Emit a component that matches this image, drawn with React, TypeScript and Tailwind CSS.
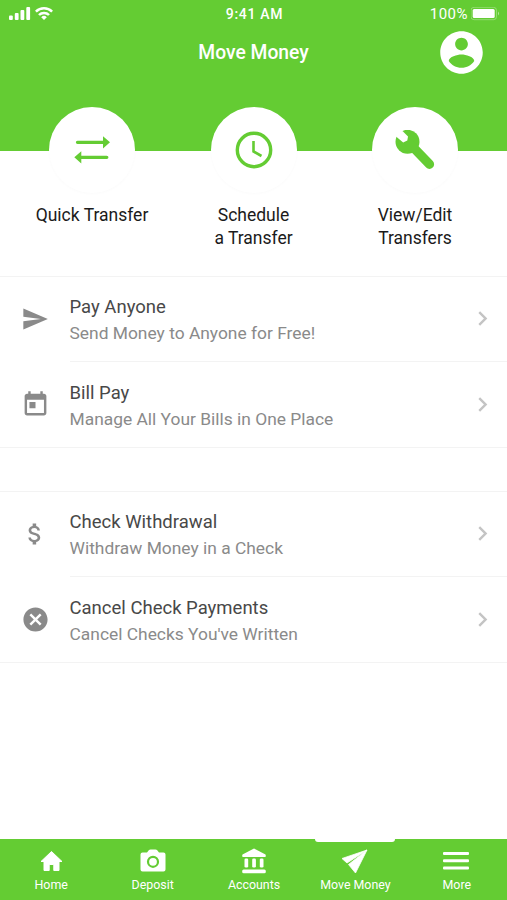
import type { ReactNode } from "react";

type IconProps = { size: number; path: string; className?: string };

const paths = {
  account:
    "M12 2C6.48 2 2 6.48 2 12s4.48 10 10 10 10-4.48 10-10S17.52 2 12 2zm0 3c1.66 0 3 1.34 3 3s-1.34 3-3 3-3-1.34-3-3 1.34-3 3-3zm0 14.2c-2.5 0-4.71-1.28-6-3.22.03-1.99 4-3.08 6-3.08 1.99 0 5.97 1.09 6 3.08-1.29 1.94-3.5 3.22-6 3.22z",
  send: "M2.01 21L23 12 2.01 3 2 10l15 2-15 2z",
  calendar:
    "M19 3h-1V1h-2v2H8V1H6v2H5c-1.11 0-1.99.9-1.99 2L3 19c0 1.1.89 2 2 2h14c1.1 0 2-.9 2-2V5c0-1.1-.9-2-2-2zm0 16H5V8h14v11zM7 10h5v5H7z",
  dollar:
    "M11.8 10.9c-2.27-.59-3-1.2-3-2.15 0-1.09 1.01-1.85 2.7-1.85 1.78 0 2.44.85 2.5 2.1h2.21c-.07-1.72-1.12-3.3-3.21-3.81V3h-3v2.16c-1.94.42-3.5 1.68-3.5 3.61 0 2.31 1.91 3.46 4.7 4.13 2.5.6 3 1.48 3 2.41 0 .69-.49 1.79-2.7 1.79-2.06 0-2.87-.92-2.98-2.1h-2.2c.12 2.19 1.76 3.42 3.68 3.83V21h3v-2.15c1.95-.37 3.5-1.5 3.5-3.55 0-2.84-2.43-3.81-4.7-4.4z",
  cancel:
    "M12 2C6.47 2 2 6.47 2 12s4.47 10 10 10 10-4.47 10-10S17.53 2 12 2zm5 13.59L15.59 17 12 13.41 8.41 17 7 15.59 10.59 12 7 8.41 8.41 7 12 10.59 15.59 7 17 8.41 13.41 12 17 15.59z",
  chevron: "M10 6L8.59 7.41 13.17 12l-4.58 4.59L10 18l6-6z",
};

function Icon({ size, path, className = "" }: IconProps) {
  return (
    <svg width={size} height={size} viewBox="0 0 24 24" fill="currentColor" className={`shrink-0 ${className}`}>
      <path d={path} />
    </svg>
  );
}

function StatusBar() {
  return (
    <div className="flex h-7 items-center pl-[9px] pr-[7px] text-white">
      <div className="flex flex-1 items-center gap-[4px]">
        <svg width="22" height="14" viewBox="0 0 22 14" fill="currentColor">
          <rect x="0" y="8.500" width="3.800" height="4.500" rx="1" />
          <rect x="5.800" y="6" width="3.800" height="7" rx="1" />
          <rect x="11.500" y="3" width="3.800" height="10" rx="1" />
          <rect x="17.300" y="0" width="3.800" height="13" rx="1" />
        </svg>
        <svg width="18" height="14" viewBox="0 0 18 14" fill="none" stroke="currentColor" strokeWidth="2.500">
          <path d="M0.900 4.700a11.500 11.500 0 0 1 16.200 0" />
          <path d="M4 8a7 7 0 0 1 10 0" />
          <path d="M9 13L6.200 10.200a4 4 0 0 1 5.600 0z" fill="currentColor" stroke="none" />
        </svg>
      </div>
      <div className="text-[14px] font-medium tracking-[0.700px]">9:41 AM</div>
      <div className="flex flex-1 items-center justify-end gap-[3px]">
        <span className="text-[15px] tracking-[0.500px]">100%</span>
        <svg width="29" height="14" viewBox="0 0 29 14">
          <rect x="0" y="0.300" width="25.500" height="12.400" rx="3" fill="none" stroke="white" strokeOpacity="0.300" />
          <rect x="1.700" y="2" width="22" height="9" rx="1.500" fill="white" />
          <path d="M27 4.500v4q2-2 0-4z" fill="white" fillOpacity="0.500" />
        </svg>
      </div>
    </div>
  );
}

function Action({ icon, lines }: { icon: ReactNode; lines: string[] }) {
  return (
    <div className="flex w-[161.500px] flex-col items-center">
      <div className="flex h-[86px] w-[86px] items-center justify-center rounded-full bg-white text-[#64cc33] shadow-[0_1px_3px_rgba(0,0,0,0.02)]">
        {icon}
      </div>
      <div className="mt-[11px] text-center text-[17.500px] leading-[22.500px] text-[#1b1b1b]">
        {lines.map((line) => (
          <div key={line}>{line}</div>
        ))}
      </div>
    </div>
  );
}

function Row({ icon, title, subtitle, last }: { icon: ReactNode; title: string; subtitle: string; last?: boolean }) {
  return (
    <div className="flex h-[85px] text-[#8a8a8a]">
      <div className="flex w-[69.500px] shrink-0 items-center justify-center">{icon}</div>
      <div className={`flex flex-1 items-center justify-between pr-[10px] ${last ? "" : "border-b border-[#f3f3f3]"}`}>
        <div className={last ? "pt-[3px]" : "pt-[2px]"}>
          <div className="text-[18.500px] leading-[26px] text-[#484848]">{title}</div>
          <div className="text-[17.400px] leading-[26px]">{subtitle}</div>
        </div>
        <Icon size={29} path={paths.chevron} className="text-[#c4c4c4]" />
      </div>
    </div>
  );
}

function Tab({ icon, label, active }: { icon: ReactNode; label: string; active?: boolean }) {
  return (
    <div className="relative flex flex-1 flex-col items-center">
      {active && <div className="absolute -top-px left-1/2 h-[4px] w-[80px] -translate-x-1/2 rounded-b-[3px] bg-white" />}
      <div className="mt-[8px] flex h-[28px] items-center justify-center">{icon}</div>
      <div className="mt-[2px] whitespace-nowrap pl-px text-[12.400px] leading-[16px]">{label}</div>
    </div>
  );
}

export default function App() {
  return (
    <div className="flex h-[900px] w-[507px] flex-col overflow-hidden bg-white font-['Roboto',sans-serif]">
      <header className="h-[151px] shrink-0 bg-[#64cc33] text-white">
        <StatusBar />
        <div className="grid h-[49px] grid-cols-[1fr_auto_1fr] items-center pr-[20px]">
          <div />
          <h1 className="pl-5 pt-px text-[19.300px] font-medium">Move Money</h1>
          <Icon size={51} path={paths.account} className="-mt-px justify-self-end" />
        </div>
      </header>

      <section className="-mt-[44px] flex h-[168.500px] shrink-0 justify-center">
        <Action
          lines={["Quick Transfer"]}
          icon={
            <svg width="38" height="30" viewBox="0 0 38 30" fill="currentColor">
              <path d="M4.500 5.700H30V1.200L37 7.300 30 13.500V9H4.500a1.650 1.650 0 0 1 0-3.300z" />
              <path d="M33.800 20.700H8.300V16.200L1.300 22.300 8.300 28.500V24h25.500a1.650 1.650 0 0 0 0-3.300z" />
            </svg>
          }
        />
        <Action
          lines={["Schedule", "a Transfer"]}
          icon={
            <svg width="38" height="38" viewBox="0 0 38 38" fill="none" stroke="currentColor">
              <circle cx="19" cy="19" r="16.700" strokeWidth="3.400" />
              <path d="M18.500 10v10.500l8 4.500" strokeWidth="2.600" />
            </svg>
          }
        />
        <Action
          lines={["View/Edit", "Transfers"]}
          icon={
            <svg width="40" height="40" viewBox="0 0 40 40">
              <circle cx="12.500" cy="11.800" r="12" fill="currentColor" />
              <path d="M14 13L34.500 34.300" stroke="currentColor" strokeWidth="9.200" strokeLinecap="round" />
              <path d="M-3 2L2.500 -3 8 1.500 13 6.500 12.300 10.500 8.200 12.500 1 6.500z" fill="white" />
            </svg>
          }
        />
      </section>

      <section className="border-y border-[#f3f3f3]">
        <Row icon={<Icon size={28} path={paths.send} />} title="Pay Anyone" subtitle="Send Money to Anyone for Free!" />
        <Row last icon={<Icon size={29} path={paths.calendar} className="ml-px" />} title="Bill Pay" subtitle="Manage All Your Bills in One Place" />
      </section>
      <section className="mt-[43px] border-y border-[#f3f3f3]">
        <Row icon={<Icon size={28} path={paths.dollar} className="-mt-px" />} title="Check Withdrawal" subtitle="Withdraw Money in a Check" />
        <Row last icon={<Icon size={29} path={paths.cancel} className="ml-px" />} title="Cancel Check Payments" subtitle="Cancel Checks You've Written" />
      </section>

      <nav className="mt-auto flex h-[61px] shrink-0 bg-[#64cc33] text-white">
        <Tab
          label="Home"
          icon={
            <svg width="24" height="22" viewBox="0 0 24 22" fill="currentColor" stroke="currentColor" strokeLinejoin="round">
              <path d="M12.500 1.500L2 11.500H5V20.500H10.200V14.500H14.800V20.500H20V11.500H23z" />
            </svg>
          }
        />
        <Tab
          label="Deposit"
          icon={
            <svg width="26" height="24" viewBox="0 0 26 24" fill="currentColor" className="ml-px">
              <path d="M2.500 3.500H7L9 1.100Q9.500 0.500 10.500 0.500H15.500Q16.500 0.500 17 1.100L19 3.500H23.500Q25.500 3.500 25.500 5.500V20.500Q25.500 22.500 23.500 22.500H2.500Q0.500 22.500 0.500 20.500V5.500Q0.500 3.500 2.500 3.500z" />
              <circle cx="13" cy="12.800" r="5" fill="none" stroke="#64cc33" strokeWidth="2.200" />
            </svg>
          }
        />
        <Tab
          label="Accounts"
          icon={
            <svg width="26" height="26" viewBox="0 0 26 26" fill="currentColor">
              <path d="M13 0.500L24.500 6.500Q25.300 9 24 9H2Q0.700 9 1.500 6.500z" />
              <rect x="3.500" y="10.500" width="3.700" height="9" rx="1.300" />
              <rect x="11.200" y="10.500" width="3.700" height="9" rx="1.300" />
              <rect x="18.800" y="10.500" width="3.700" height="9" rx="1.300" />
              <rect x="1.200" y="21.500" width="23.600" height="3.800" rx="1.500" />
            </svg>
          }
        />
        <Tab
          active
          label="Move Money"
          icon={
            <svg width="27" height="25" viewBox="0 0 27 25" fill="currentColor" stroke="currentColor" strokeWidth="0.800" strokeLinejoin="round">
              <path d="M26 1L1 9.500 6 14z" />
              <path d="M26 1L7.500 15.500 14.500 24z" />
            </svg>
          }
        />
        <Tab
          label="More"
          icon={
            <svg width="26" height="20" viewBox="0 0 26 20" fill="currentColor">
              <rect y="1" width="26" height="3" rx="1" />
              <rect y="8.200" width="26" height="3" rx="1" />
              <rect y="15.500" width="26" height="3" rx="1" />
            </svg>
          }
        />
      </nav>
    </div>
  );
}
